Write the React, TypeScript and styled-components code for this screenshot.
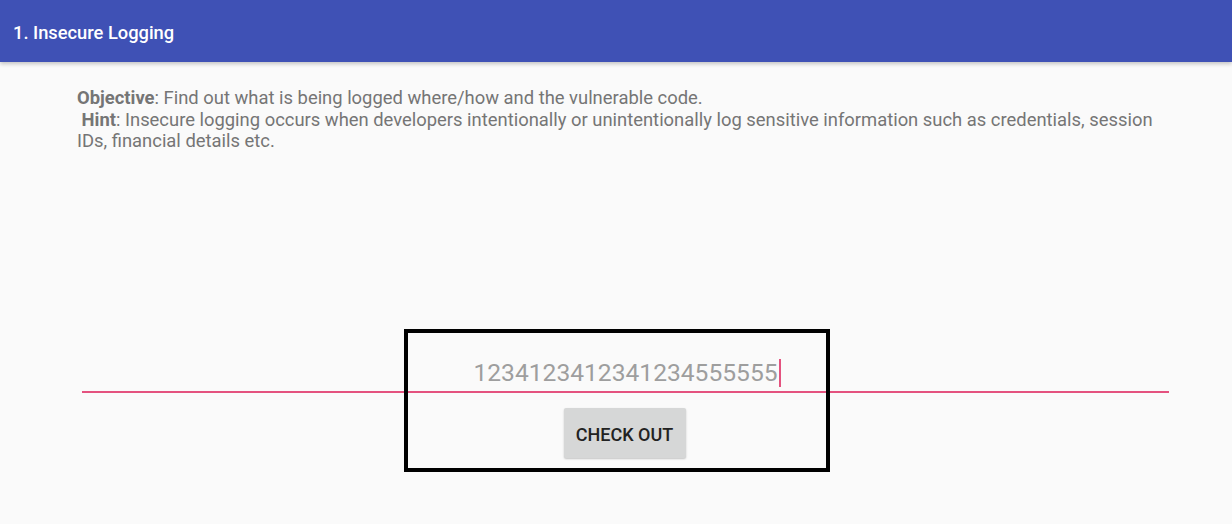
import React from "react";
import styled, { createGlobalStyle } from "styled-components";

const GlobalStyle = createGlobalStyle`
  html, body {
    margin: 0;
    padding: 0;
    background: #fafafa;
    font-family: Roboto, "Noto Sans", sans-serif;
  }
  #root {
    width: 1232px;
    height: 524px;
    position: relative;
    overflow: hidden;
  }
`;

const Screen = styled.div`
  display: flex;
  flex-direction: column;
  width: 1232px;
  height: 524px;
  background: #fafafa;
  position: relative;
`;

const AppBar = styled.header`
  height: 62px;
  flex: none;
  display: flex;
  align-items: center;
  padding-left: 13px;
  background: #3f51b5;
  box-shadow: 0 2px 4px rgba(0, 0, 0, 0.22);
  position: relative;
  z-index: 1;
`;

const Title = styled.h1`
  margin: 0;
  margin-top: 2px;
  font-size: 18.3px;
  font-weight: 500;
  color: #ffffff;
`;

const Body = styled.main`
  display: flex;
  flex-direction: column;
  padding: 25px 0 0 77px;
`;

const Description = styled.p`
  margin: 0;
  width: 1085px;
  font-size: 18.4px;
  line-height: 21.5px;
  color: #757575;
`;

const Strong = styled.b`
  font-weight: 700;
`;

const Form = styled.div`
  display: flex;
  flex-direction: column;
  align-items: center;
  margin-top: 205px;
  margin-left: 5px;
  width: 1087px;
`;

const Field = styled.div`
  width: 100%;
  height: 34px;
  display: flex;
  justify-content: center;
  align-items: flex-start;
  border-bottom: 2px solid #e4527f;
`;

const Value = styled.span`
  font-size: 24.6px;
  line-height: 34px;
  color: #9e9e9e;
  display: inline-flex;
  align-items: center;
  margin-left: 3px;
  margin-top: -1px;
`;

const Caret = styled.span`
  display: inline-block;
  width: 2px;
  height: 28px;
  margin-left: 1px;
  background: #e4527f;
`;

const Button = styled.button`
  margin-top: 15px;
  margin-right: 2px;
  width: 122px;
  height: 50px;
  border: none;
  border-radius: 2px;
  background: #d6d7d7;
  box-shadow: 0 1px 2px rgba(0, 0, 0, 0.22);
  font-family: Roboto, "Noto Sans", sans-serif;
  font-size: 18px;
  font-weight: 500;
  color: #222222;
  padding: 3px 0 0;
`;

const Highlight = styled.div`
  position: absolute;
  left: 404px;
  top: 329px;
  width: 426px;
  height: 143px;
  box-sizing: border-box;
  border: 4px solid #000;
  pointer-events: none;
`;

export default function App() {
  return (
    <>
      <GlobalStyle />
      <Screen>
        <AppBar>
          <Title>1. Insecure Logging</Title>
        </AppBar>
        <Body>
          <Description>
            <Strong>Objective</Strong>: Find out what is being logged where/how and the vulnerable code.
            <br />
            &nbsp;<Strong>Hint</Strong>: Insecure logging occurs when developers intentionally or unintentionally log sensitive information such as credentials, session IDs, financial details etc.
          </Description>
          <Form>
            <Field>
              <Value>
                1234123412341234555555
                <Caret />
              </Value>
            </Field>
            <Button>CHECK OUT</Button>
          </Form>
        </Body>
        <Highlight />
      </Screen>
    </>
  );
}
